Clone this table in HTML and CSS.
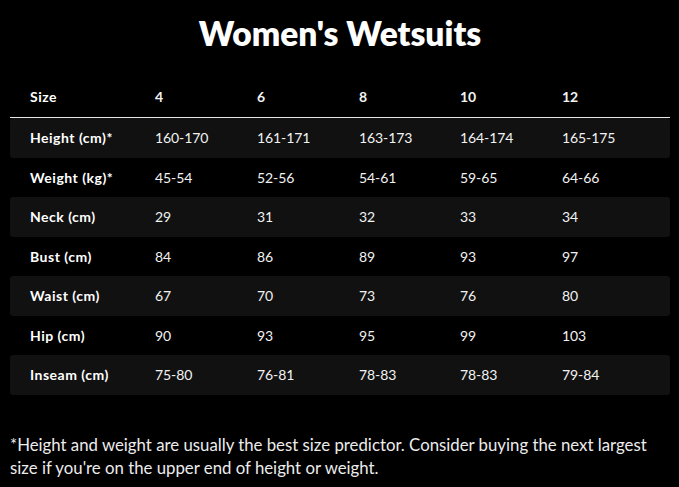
FILE: index.html
```html
<!DOCTYPE html>
<html>
<head>
<meta charset="utf-8">
<link rel="stylesheet" href="styles.css">
</head>
<body>
<div class="page">
  <h1 class="title">Women's Wetsuits</h1>
  <div class="table">
    <div class="row head">
      <div class="cell label">Size</div><div class="cell">4</div><div class="cell">6</div><div class="cell">8</div><div class="cell">10</div><div class="cell">12</div>
    </div>
    <div class="row shade">
      <div class="cell label">Height (cm)*</div><div class="cell">160-170</div><div class="cell">161-171</div><div class="cell">163-173</div><div class="cell">164-174</div><div class="cell">165-175</div>
    </div>
    <div class="row">
      <div class="cell label">Weight (kg)*</div><div class="cell">45-54</div><div class="cell">52-56</div><div class="cell">54-61</div><div class="cell">59-65</div><div class="cell">64-66</div>
    </div>
    <div class="row shade">
      <div class="cell label">Neck (cm)</div><div class="cell">29</div><div class="cell">31</div><div class="cell">32</div><div class="cell">33</div><div class="cell">34</div>
    </div>
    <div class="row">
      <div class="cell label">Bust (cm)</div><div class="cell">84</div><div class="cell">86</div><div class="cell">89</div><div class="cell">93</div><div class="cell">97</div>
    </div>
    <div class="row shade">
      <div class="cell label">Waist (cm)</div><div class="cell">67</div><div class="cell">70</div><div class="cell">73</div><div class="cell">76</div><div class="cell">80</div>
    </div>
    <div class="row">
      <div class="cell label">Hip (cm)</div><div class="cell">90</div><div class="cell">93</div><div class="cell">95</div><div class="cell">99</div><div class="cell">103</div>
    </div>
    <div class="row shade">
      <div class="cell label">Inseam (cm)</div><div class="cell">75-80</div><div class="cell">76-81</div><div class="cell">78-83</div><div class="cell">78-83</div><div class="cell">79-84</div>
    </div>
  </div>
  <p class="note">*Height and weight are usually the best size predictor. Consider buying the next largest size if you're on the upper end of height or weight.</p>
</div>
</body>
</html>
```

FILE: styles.css
```css
html, body {
  margin: 0;
  padding: 0;
  background: #000;
  color: #fff;
  font-family: Lato, "Noto Sans", sans-serif;
}
.page {
  padding: 0 9px 0 10px;
}
.title {
  margin: 0;
  padding-top: 14px;
  height: 76px;
  box-sizing: border-box;
  text-align: center;
  font-size: 33.5px;
  font-weight: 800;
  line-height: 38px;
}
.table {
  display: flex;
  flex-direction: column;
}
.row {
  display: grid;
  grid-template-columns: 125px 102px 102px 101px 102px 1fr;
  height: 39.5px;
  align-items: center;
  font-size: 14px;
  border-radius: 3px;
}
.row.head {
  height: 41px;
  border-bottom: 1px solid #e6e6e6;
  border-radius: 0;
  font-weight: 700;
}
.row.shade {
  background: #111111;
}
.cell {
  padding-left: 20px;
  color: #f2f2f2;
  letter-spacing: -0.1px;
}
.label {
  font-weight: 700;
  color: #fff;
  letter-spacing: 0.5px;
}
.note {
  margin: 38px 0 0 0;
  font-size: 16.8px;
  line-height: 23px;
  color: #ececec;
}
```
